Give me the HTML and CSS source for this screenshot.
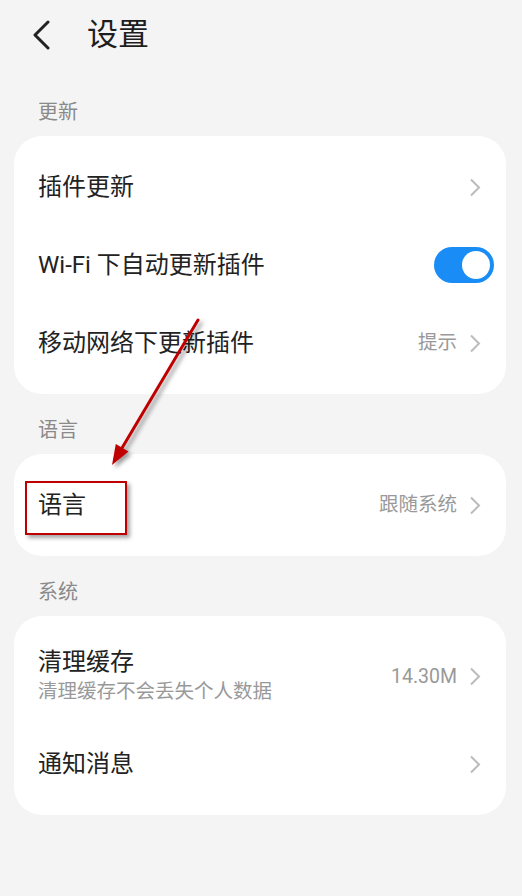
FILE: index.html
```html
<!DOCTYPE html>
<html lang="zh-CN">
<head>
<meta charset="utf-8">
<link rel="stylesheet" href="styles.css">
</head>
<body>
<div class="page">
  <header class="topbar">
    <svg class="back" width="20" height="30" viewBox="0 0 20 30"><path d="M16 2 L3 15 L16 28" fill="none" stroke="#222" stroke-width="3" stroke-linecap="round" stroke-linejoin="round"/></svg>
    <h1 class="title">设置</h1>
  </header>

  <div class="section-label">更新</div>
  <div class="card">
    <div class="row">
      <span class="row-title">插件更新</span>
      <span class="row-right"><svg class="chev" width="12" height="19" viewBox="0 0 12 19"><path d="M2 1.5 L10 9.5 L2 17.5" fill="none" stroke="#bbb" stroke-width="2"/></svg></span>
    </div>
    <div class="row">
      <span class="row-title">Wi-Fi 下自动更新插件</span>
      <span class="toggle"><span class="knob"></span></span>
    </div>
    <div class="row">
      <span class="row-title">移动网络下更新插件</span>
      <span class="row-right"><span class="value">提示</span><svg class="chev" width="12" height="19" viewBox="0 0 12 19"><path d="M2 1.5 L10 9.5 L2 17.5" fill="none" stroke="#bbb" stroke-width="2"/></svg></span>
    </div>
  </div>

  <div class="section-label">语言</div>
  <div class="card">
    <div class="row">
      <span class="row-title">语言</span>
      <span class="row-right"><span class="value">跟随系统</span><svg class="chev" width="12" height="19" viewBox="0 0 12 19"><path d="M2 1.5 L10 9.5 L2 17.5" fill="none" stroke="#bbb" stroke-width="2"/></svg></span>
    </div>
  </div>

  <div class="section-label">系统</div>
  <div class="card">
    <div class="row row-tall">
      <span class="row-text">
        <span class="row-title">清理缓存</span>
        <span class="row-sub">清理缓存不会丢失个人数据</span>
      </span>
      <span class="row-right"><span class="value">14.30M</span><svg class="chev" width="12" height="19" viewBox="0 0 12 19"><path d="M2 1.5 L10 9.5 L2 17.5" fill="none" stroke="#bbb" stroke-width="2"/></svg></span>
    </div>
    <div class="row">
      <span class="row-title">通知消息</span>
      <span class="row-right"><svg class="chev" width="12" height="19" viewBox="0 0 12 19"><path d="M2 1.5 L10 9.5 L2 17.5" fill="none" stroke="#bbb" stroke-width="2"/></svg></span>
    </div>
  </div>

  <div class="mark-box"></div>
  <svg class="mark-arrow" width="522" height="896" viewBox="0 0 522 896">
    <line x1="198" y1="320" x2="122" y2="448" stroke="#c00000" stroke-width="3" stroke-linecap="round"/>
    <polygon points="112,465 128.5,451.5 115.8,444" fill="#c00000"/>
  </svg>
</div>
</body>
</html>
```

FILE: styles.css
```css
html, body {
  margin: 0;
  padding: 0;
  background: #f4f4f4;
}
body {
  font-family: "Roboto", "Noto Sans CJK SC", sans-serif;
  color: #222;
}
.page {
  position: relative;
  width: 522px;
  height: 896px;
  overflow: hidden;
}
.topbar {
  height: 76px;
  display: flex;
  align-items: center;
  padding-left: 32px;
  padding-bottom: 6px;
  box-sizing: border-box;
}
.back {
  display: block;
}
.title {
  margin: 0 0 0 35px;
  font-size: 31px;
  font-weight: 400;
  line-height: 40px;
  color: #1e1e1e;
}
.section-label {
  padding: 24px 0 12px 38px;
  font-size: 20px;
  line-height: 24px;
  color: #8a8a8a;
}
.card {
  margin: 0 16px 0 14px;
  background: #fff;
  border-radius: 28px;
  padding: 12px 0;
}
.row {
  height: 78px;
  display: flex;
  align-items: center;
  justify-content: space-between;
  padding: 0 25px 0 24px;
}
.row-tall {
  height: 97px;
}
.row-text {
  display: flex;
  flex-direction: column;
}
.row-title {
  font-size: 24px;
  line-height: 30px;
  color: #222;
}
.row-sub {
  font-size: 19.5px;
  line-height: 30px;
  color: #999;
}
.row-right {
  display: flex;
  align-items: center;
  gap: 12px;
}
.value {
  font-size: 19.5px;
  line-height: 26px;
  color: #999;
}
.chev {
  display: block;
}
.toggle {
  width: 60px;
  height: 36px;
  border-radius: 18px;
  background: #1a8cf5;
  margin-right: -13px;
  display: flex;
  align-items: center;
  justify-content: flex-end;
  padding-right: 4px;
  box-sizing: border-box;
}
.knob {
  width: 28px;
  height: 28px;
  border-radius: 50%;
  background: #fff;
}
.mark-box {
  position: absolute;
  left: 25px;
  top: 481px;
  width: 98px;
  height: 50px;
  border: 2px solid #c00000;
  box-shadow: 3px 3px 4px rgba(0, 0, 0, 0.35);
}
.mark-arrow {
  position: absolute;
  left: 0;
  top: 0;
  filter: drop-shadow(3px 3px 2px rgba(0, 0, 0, 0.4));
  pointer-events: none;
}
```
